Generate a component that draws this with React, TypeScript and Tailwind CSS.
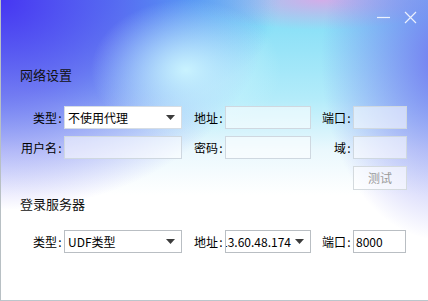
import type { ReactNode } from 'react'

const font = { fontFamily: '"Noto Sans CJK SC", "Noto Sans", sans-serif' }

function Label({ w, children }: { w: string; children: ReactNode }) {
    return (
        <span className={`${w} shrink-0 flex justify-end text-[12px] leading-[14px] text-black pr-[1px]`}>
            {children}
            <span className="w-[6px] text-center">:</span>
        </span>
    )
}

function Arrow() {
    return (
        <svg width="9" height="5" viewBox="0 0 9 5" className="shrink-0">
            <path d="M0 0H9L4.5 5Z" fill="#3c3c3c" />
        </svg>
    )
}

function Input({ w, value, solid }: { w: string; value?: string; solid?: boolean }) {
    return (
        <div className={`${w} h-[23px] shrink-0 flex items-center px-[2px] border text-[12px] text-black ${solid ? 'bg-white border-[#b9bec3]' : 'bg-white/55 border-[#cfd8e0]'}`}>
            {value}
        </div>
    )
}

export default function App() {
    return (
        <div className="w-[428px] h-[301px] overflow-hidden flex flex-col border-l border-[#b8c0c4] border-b border-b-[#bcc6cc] bg-white [background-image:radial-gradient(ellipse_95px_70px_at_185px_70px,rgba(205,246,255,0.95),rgba(205,246,255,0)),radial-gradient(ellipse_270px_210px_at_0px_0px,#4636f2_0%,rgba(95,90,240,0.78)_45%,rgba(140,140,245,0)_100%),radial-gradient(ellipse_170px_110px_at_110px_0px,#38b4f6,rgba(56,180,246,0)),radial-gradient(ellipse_120px_180px_at_440px_60px,rgba(110,115,240,0.92),rgba(115,120,240,0)),radial-gradient(ellipse_130px_30px_at_320px_0px,rgba(225,165,230,0.85),rgba(225,165,230,0)),linear-gradient(to_bottom,#7ddcf6_0px,#b4ecfa_100px,#eaf8fd_150px,#ffffff_195px)]" style={font}>
            {/* title bar */}
            <div className="h-[32px] shrink-0 flex justify-end items-start pt-[11px] pr-[11px] gap-[13px]">
                <svg width="15" height="13" viewBox="0 0 15 13">
                    <path d="M1 6.5H14" stroke="rgba(255,255,255,0.85)" strokeWidth="1.2" />
                </svg>
                <svg width="13" height="13" viewBox="0 0 13 13">
                    <path d="M1 1L12 12M12 1L1 12" stroke="rgba(255,255,255,0.85)" strokeWidth="1.2" />
                </svg>
            </div>

            <div className="mt-[36px] pl-[19px] text-[13px] leading-[13px] text-[#111]">网络设置</div>

            <div className="mt-[25px] flex items-center pl-[19px]">
                <Label w="w-[44px]">类型</Label>
                <div className="w-[118px] h-[23px] shrink-0 flex items-center justify-between pl-[3px] pr-[6px] bg-white border border-[#d6dde4] text-[12px] text-black">
                    <span>不使用代理</span>
                    <Arrow />
                </div>
                <Label w="w-[43px]">地址</Label>
                <Input w="w-[86px]" />
                <Label w="w-[42px]">端口</Label>
                <Input w="w-[54px]" />
            </div>

            <div className="mt-[7px] flex items-center pl-[19px]">
                <Label w="w-[44px]">用户名</Label>
                <Input w="w-[118px]" />
                <Label w="w-[43px]">密码</Label>
                <Input w="w-[86px]" />
                <Label w="w-[42px]">域</Label>
                <Input w="w-[54px]" />
            </div>

            <div className="mt-[7px] flex justify-end pr-[21px]">
                <div className="w-[54px] h-[24px] flex items-center justify-center border border-[#d4dade] bg-white/60 text-[12px] text-[#9a9a9a]">
                    测试
                </div>
            </div>

            <div className="mt-[7px] pl-[19px] text-[13px] leading-[13px] text-[#111]">登录服务器</div>

            <div className="mt-[20px] flex items-center pl-[19px]">
                <Label w="w-[44px]">类型</Label>
                <div className="w-[118px] h-[23px] shrink-0 flex items-center justify-between pl-[3px] pr-[6px] bg-white border border-[#b9bec3] text-[12px] text-black">
                    <span>UDF类型</span>
                    <Arrow />
                </div>
                <Label w="w-[43px]">地址</Label>
                <div className="w-[86px] h-[23px] shrink-0 flex items-center bg-white border border-[#b9bec3] text-[12px] text-black pr-[6px]">
                    <div className="flex-1 min-w-0 overflow-hidden flex justify-end whitespace-nowrap pr-[4px]">
                        <span className="shrink-0">113.60.48.174</span>
                    </div>
                    <Arrow />
                </div>
                <Label w="w-[42px]">端口</Label>
                <Input w="w-[53px]" value="8000" solid />
            </div>
        </div>
    )
}
